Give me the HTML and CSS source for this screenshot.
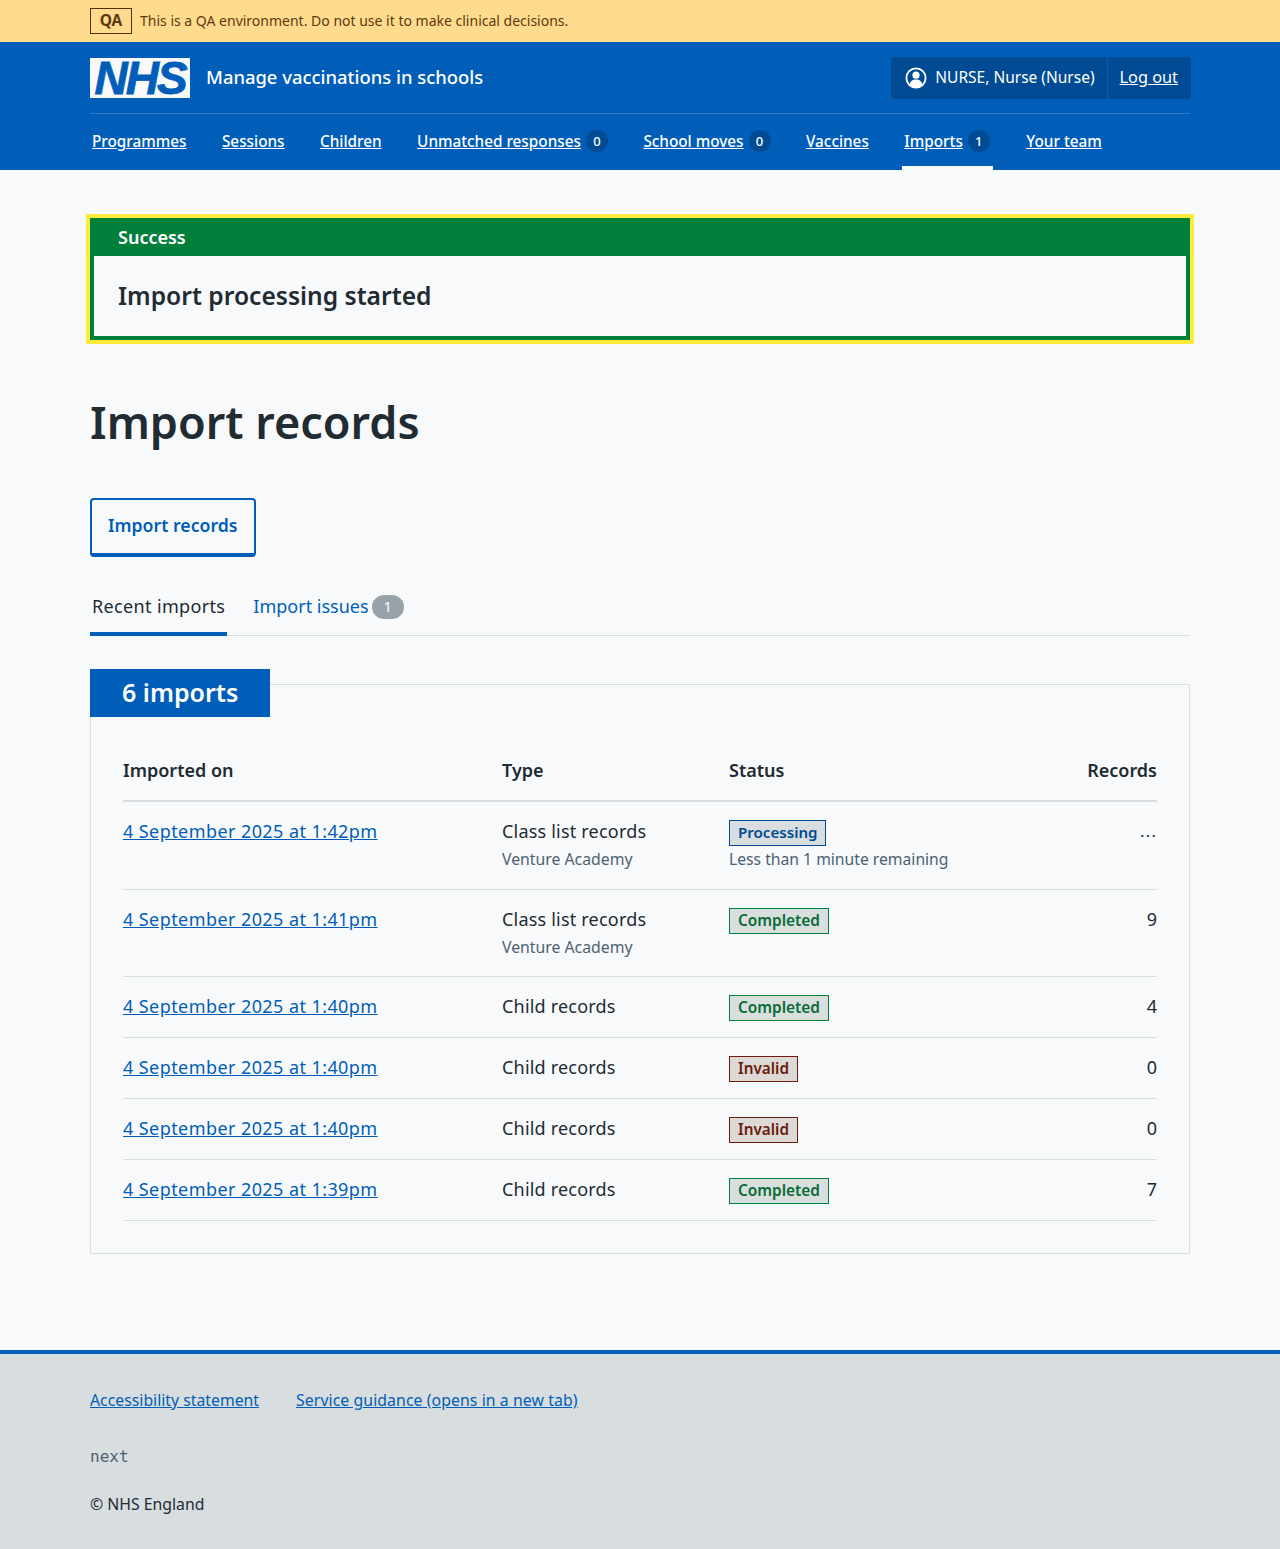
FILE: index.html
```html
<!DOCTYPE html>
<html lang="en">
<head>
    <meta charset="UTF-8">
    <meta name="viewport" content="width=device-width, initial-scale=1.0">
    <title>Import records - Manage vaccinations in schools</title>
    <link rel="stylesheet" href="styles.css">
</head>
<body>
    <div class="env-banner">
        <div class="container env-inner">
            <strong class="env-tag">QA</strong>
            <span>This is a QA environment. Do not use it to make clinical decisions.</span>
        </div>
    </div>

    <header class="header">
        <div class="container">
            <div class="header-top">
                <a class="logo" href="#">NHS</a>
                <a class="service-name" href="#">Manage vaccinations in schools</a>
                <div class="account">
                    <div class="account-user">
                        <svg class="account-icon" viewBox="0 0 22 22" aria-hidden="true">
                            <circle cx="11" cy="11" r="9.6" fill="none" stroke="#fff" stroke-width="1.8"/>
                            <circle cx="11" cy="8.2" r="3.6" fill="#fff"/>
                            <path d="M4.8 18.2c0-3.9 2.6-5.8 6.2-5.8s6.2 1.9 6.2 5.8c-1.6 1.7-3.8 2.8-6.2 2.8s-4.6-1.1-6.2-2.8z" fill="#fff"/>
                        </svg>
                        <span class="account-name">NURSE, Nurse (Nurse)</span>
                    </div>
                    <a class="account-logout" href="#">Log out</a>
                </div>
            </div>
            <nav class="nav">
                <a class="nav-item" href="#"><span class="nav-text">Programmes</span></a>
                <a class="nav-item" href="#"><span class="nav-text">Sessions</span></a>
                <a class="nav-item" href="#"><span class="nav-text">Children</span></a>
                <a class="nav-item" href="#"><span class="nav-text">Unmatched responses</span><span class="nav-count">0</span></a>
                <a class="nav-item" href="#"><span class="nav-text">School moves</span><span class="nav-count">0</span></a>
                <a class="nav-item" href="#"><span class="nav-text">Vaccines</span></a>
                <a class="nav-item nav-item-active" href="#"><span class="nav-text">Imports</span><span class="nav-count">1</span></a>
                <a class="nav-item" href="#"><span class="nav-text">Your team</span></a>
            </nav>
        </div>
    </header>

    <main class="container main">
        <div class="notice">
            <div class="notice-title">Success</div>
            <div class="notice-body">Import processing started</div>
        </div>

        <h1 class="page-title">Import records</h1>

        <a class="button" href="#">Import records</a>

        <div class="tabs">
            <a class="tab tab-current" href="#">Recent imports</a>
            <a class="tab" href="#">Import issues<span class="tab-count">1</span></a>
        </div>

        <section class="card">
            <h2 class="card-heading">6 imports</h2>
            <table class="table">
                <thead>
                    <tr>
                        <th class="col-date">Imported on</th>
                        <th class="col-type">Type</th>
                        <th class="col-status">Status</th>
                        <th class="num">Records</th>
                    </tr>
                </thead>
                <tbody>
                    <tr>
                        <td class="cell-date"><a href="#">4 September 2025 at 1:42pm</a></td>
                        <td class="cell-type">Class list records<div class="hint">Venture Academy</div></td>
                        <td><span class="tag tag-blue">Processing</span><div class="hint hint-status">Less than 1 minute remaining</div></td>
                        <td class="num num-pending">…</td>
                    </tr>
                    <tr>
                        <td class="cell-date"><a href="#">4 September 2025 at 1:41pm</a></td>
                        <td class="cell-type">Class list records<div class="hint">Venture Academy</div></td>
                        <td><span class="tag tag-green">Completed</span></td>
                        <td class="num">9</td>
                    </tr>
                    <tr>
                        <td class="cell-date"><a href="#">4 September 2025 at 1:40pm</a></td>
                        <td class="cell-type">Child records</td>
                        <td><span class="tag tag-green">Completed</span></td>
                        <td class="num">4</td>
                    </tr>
                    <tr>
                        <td class="cell-date"><a href="#">4 September 2025 at 1:40pm</a></td>
                        <td class="cell-type">Child records</td>
                        <td><span class="tag tag-red">Invalid</span></td>
                        <td class="num">0</td>
                    </tr>
                    <tr>
                        <td class="cell-date"><a href="#">4 September 2025 at 1:40pm</a></td>
                        <td class="cell-type">Child records</td>
                        <td><span class="tag tag-red">Invalid</span></td>
                        <td class="num">0</td>
                    </tr>
                    <tr>
                        <td class="cell-date"><a href="#">4 September 2025 at 1:39pm</a></td>
                        <td class="cell-type">Child records</td>
                        <td><span class="tag tag-green">Completed</span></td>
                        <td class="num">7</td>
                    </tr>
                </tbody>
            </table>
        </section>
    </main>

    <footer class="footer">
        <div class="container">
            <div class="footer-links">
                <a href="#">Accessibility statement</a>
                <a class="footer-guidance" href="#">Service guidance (opens in a new tab)</a>
            </div>
            <div class="footer-version">next</div>
            <p class="footer-copy">© NHS England</p>
        </div>
    </footer>
</body>
</html>
```

FILE: styles.css
```css
* {
    box-sizing: border-box;
}
body {
    margin: 0;
    background: #f8f9fb;
    color: #212b32;
    font-family: "Noto Sans", Arial, sans-serif;
    font-size: 18px;
    line-height: 28px;
}
a {
    color: #005eb8;
}
.container {
    width: 1100px;
    margin: 0 auto;
}

/* environment banner */
.env-banner {
    height: 42px;
    background: #ffdb8d;
    color: #5c3a10;
    font-size: 14px;
}
.env-inner {
    display: flex;
    align-items: center;
    gap: 8px;
    height: 42px;
}
.env-tag {
    width: 42px;
    height: 26px;
    border: 1px solid #5c2d0a;
    font-size: 15.5px;
    line-height: 23px;
    text-align: center;
}

/* header */
.header {
    height: 128px;
    background: #005eb8;
    color: #fff;
}
.header a {
    color: #fff;
}
.header-top {
    display: flex;
    align-items: center;
    height: 72px;
    padding-top: 1px;
    border-bottom: 1px solid #2b78c4;
}
.logo {
    width: 100px;
    height: 40px;
    background: #f8f9fb;
    color: #005eb8 !important;
    font-family: "Liberation Sans", Arial, sans-serif;
    font-size: 46px;
    font-style: italic;
    font-weight: bold;
    letter-spacing: -2px;
    line-height: 40px;
    text-align: center;
    text-decoration: none;
    -webkit-text-stroke: 0.8px #005eb8;
}
.service-name {
    margin-left: 16px;
    margin-top: -2px;
    font-size: 18.4px;
    font-weight: 500;
    text-decoration: none;
}
.account {
    display: flex;
    align-items: center;
    height: 42px;
    margin-left: auto;
    margin-right: -1px;
    background: #004b93;
    border-radius: 4px;
    font-size: 15.5px;
    line-height: 38px;
}
.account-user {
    display: flex;
    align-items: center;
    gap: 8px;
    height: 42px;
    padding: 0 12px 0 14px;
    border-right: 1px solid #005eb8;
}
.account-icon {
    width: 22px;
    height: 22px;
}
.account-name {
    height: 40px;
}
.account-logout {
    height: 40px;
    padding: 0 13px 0 12px;
    font-size: 16.3px;
}
.nav {
    display: flex;
    gap: 35.5px;
    height: 56px;
    padding-left: 2px;
    font-size: 15.3px;
    font-weight: 500;
}
.nav-item {
    display: flex;
    align-items: center;
    gap: 5px;
    height: 56px;
    padding-bottom: 2px;
    text-decoration: none;
}
.nav-text {
    text-decoration: underline;
}
.nav-count {
    width: 22px;
    height: 22px;
    border-radius: 50%;
    background: #004b93;
    font-size: 13px;
    line-height: 22px;
    text-align: center;
}
.nav-item-active {
    margin: 0 -2px;
    padding: 2px 3px 0 2px;
    border-bottom: 4px solid #f8f9fb;
}

/* main */
.main {
    height: 1180px;
    padding-top: 48px;
}
.notice {
    margin: -4px -4px 0;
    border: 4px solid #ffeb3b;
}
.notice-title {
    height: 38px;
    padding-left: 28px;
    background: #007f3b;
    color: #fff;
    font-size: 18px;
    font-weight: 600;
    line-height: 38px;
}
.notice-body {
    height: 84px;
    padding: 0 24px;
    border: 4px solid #007f3b;
    border-top: 0;
    font-size: 24.6px;
    font-weight: 600;
    line-height: 80px;
}
.page-title {
    margin: 49px 0 47px;
    font-size: 45px;
    font-weight: 600;
    line-height: 58px;
}
.button {
    display: inline-block;
    height: 59px;
    padding: 0 16px;
    border: 2px solid #005eb8;
    border-bottom-width: 4px;
    border-radius: 4px;
    font-size: 17.7px;
    font-weight: 600;
    line-height: 51px;
    text-decoration: none;
}

/* tabs */
.tabs {
    display: flex;
    gap: 24px;
    height: 53px;
    margin-top: 26px;
    border-bottom: 1px solid #d8dde0;
}
.tab {
    height: 53px;
    padding: 9px 2px 0;
    text-decoration: none;
}
.tab-current {
    border-bottom: 4px solid #005eb8;
    color: #212b32;
    letter-spacing: 0.35px;
}
.tab-count {
    display: inline-block;
    width: 32px;
    height: 24px;
    margin-left: 3px;
    border-radius: 12px;
    background: #97a3a9;
    color: #fff;
    font-size: 14px;
    line-height: 24px;
    text-align: center;
    vertical-align: 1px;
}

/* card with the table */
.card {
    height: 570px;
    margin-top: 48px;
    padding: 0 32px;
    border: 1px solid #d8dde0;
}
.card-heading {
    width: 180px;
    height: 48px;
    margin: -16px 0 0 -33px;
    padding-left: 32px;
    background: #005eb8;
    color: #fff;
    font-size: 25px;
    font-weight: 600;
    line-height: 46px;
}
.table {
    width: 100%;
    margin-top: 32px;
    border-collapse: collapse;
    table-layout: fixed;
}
.table th {
    height: 52px;
    padding: 7px 0 0;
    border-bottom: 2px solid #d8dde0;
    font-weight: 600;
    text-align: left;
    vertical-align: top;
}
.table td {
    height: 61px;
    padding: 15px 0 0;
    border-bottom: 1px solid #d8dde0;
    vertical-align: top;
}
.table .num {
    text-align: right;
}
.table .num-pending {
    font-family: "Liberation Sans", Arial, sans-serif;
}
.col-date {
    width: 379px;
}
.col-type {
    width: 227px;
}
.col-status {
    width: 300px;
}
.cell-date {
    letter-spacing: 0.42px;
}
.cell-type {
    letter-spacing: 0.2px;
}
.hint {
    color: #4c6272;
    font-size: 15.8px;
    letter-spacing: 0;
    line-height: 28px;
    padding-bottom: 15px;
}
.hint-status {
    font-size: 15.7px;
    line-height: 26px;
    padding-bottom: 17px;
}

/* tags */
.tag {
    display: inline-block;
    height: 26px;
    margin-top: 3px;
    padding: 0 8px;
    border: 1px solid;
    font-size: 15.3px;
    font-weight: 600;
    line-height: 23px;
    vertical-align: top;
}
.tag-blue {
    background: #d8dde0;
    color: #004b93;
    font-size: 15.1px;
}
.tag-green {
    background: #d9dfdc;
    color: #0a6b3a;
    border-color: #007f3b;
    font-size: 15.4px;
}
.tag-red {
    background: #dcd9d7;
    color: #6b1c0a;
}

/* footer */
.footer {
    height: 199px;
    padding-top: 32px;
    background: #d8dde0;
    border-top: 4px solid #005eb8;
    font-size: 15.8px;
}
.footer-links {
    display: flex;
    gap: 37px;
}
.footer-guidance {
    letter-spacing: 0.08px;
}
.footer-version {
    margin-top: 29px;
    color: #4c6272;
    font-family: "DejaVu Sans Mono", monospace;
    font-size: 16px;
}
.footer-copy {
    margin: 19px 0 0;
}
```
